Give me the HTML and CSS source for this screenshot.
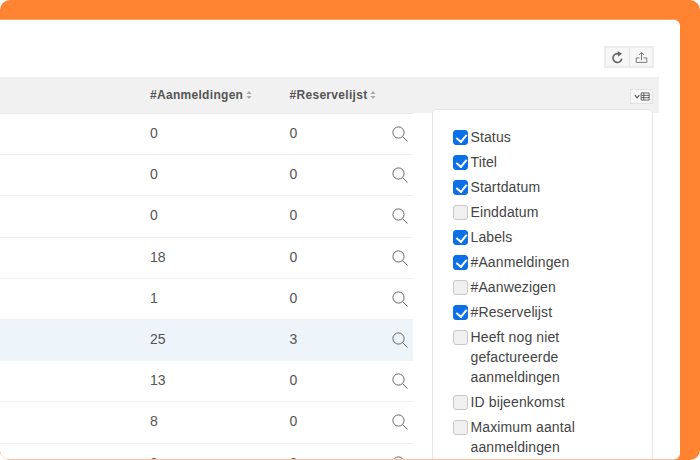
FILE: index.html
```html
<!DOCTYPE html>
<html lang="nl">
<head>
<meta charset="utf-8">
<title>Bijeenkomsten</title>
<link rel="stylesheet" href="styles.css">
</head>
<body>
<div class="frame">
  <main class="card">
    <div class="toolbar">
      <div class="btn-group">
        <button class="tool-btn" type="button" aria-label="Vernieuwen">
          <svg class="tool-icon" viewBox="0 0 16 16"><path d="M13.2 9.4a5.4 5.4 0 1 1-4.2-6" fill="none" stroke="#666" stroke-width="2"/><path d="M8.2 0 13.6 3.4 8.6 7z" fill="#666"/></svg>
        </button>
        <button class="tool-btn" type="button" aria-label="Exporteren">
          <svg class="tool-icon" viewBox="0 0 16 16"><path d="M8 11.5V2M5 4.8 8 1.8l3 3M5.5 8.5H1.5v5.5h13V8.5h-4" fill="none" stroke="#777" stroke-width="1.2"/></svg>
        </button>
      </div>
    </div>
    <div class="table-area">
      <div class="head-row">
        <div class="col-num head-cell">#Aanmeldingen<svg class="sort" viewBox="0 0 6 8"><path d="M3 0 5.5 3H.5zM3 8 .5 5h5z" fill="#aaa"/></svg></div>
        <div class="col-res head-cell">#Reservelijst<svg class="sort" viewBox="0 0 6 8"><path d="M3 0 5.5 3H.5zM3 8 .5 5h5z" fill="#aaa"/></svg></div>
        <button class="col-toggle" type="button" aria-label="Kolommen">
          <svg class="toggle-icon" viewBox="0 0 18 10"><path d="M1 3.5 3.5 6.5 6 3.5" fill="none" stroke="#555" stroke-width="1.3"/><path d="M8 1h9v8H8zM8 3.7h9M8 6.3h9M11 1v8" fill="none" stroke="#555" stroke-width="1"/></svg>
        </button>
      </div>
      <div class="body-area">
        <div class="rows">
          <div class="row"><div class="col-num">0</div><div class="col-res">0</div><svg class="search" viewBox="0 0 16 16"><circle cx="6.5" cy="6.5" r="5.6"/><path d="M10.6 10.6 15.5 15.5"/></svg></div>
          <div class="row"><div class="col-num">0</div><div class="col-res">0</div><svg class="search" viewBox="0 0 16 16"><circle cx="6.5" cy="6.5" r="5.6"/><path d="M10.6 10.6 15.5 15.5"/></svg></div>
          <div class="row"><div class="col-num">0</div><div class="col-res">0</div><svg class="search" viewBox="0 0 16 16"><circle cx="6.5" cy="6.5" r="5.6"/><path d="M10.6 10.6 15.5 15.5"/></svg></div>
          <div class="row"><div class="col-num">18</div><div class="col-res">0</div><svg class="search" viewBox="0 0 16 16"><circle cx="6.5" cy="6.5" r="5.6"/><path d="M10.6 10.6 15.5 15.5"/></svg></div>
          <div class="row"><div class="col-num">1</div><div class="col-res">0</div><svg class="search" viewBox="0 0 16 16"><circle cx="6.5" cy="6.5" r="5.6"/><path d="M10.6 10.6 15.5 15.5"/></svg></div>
          <div class="row row-active"><div class="col-num">25</div><div class="col-res">3</div><svg class="search" viewBox="0 0 16 16"><circle cx="6.5" cy="6.5" r="5.6"/><path d="M10.6 10.6 15.5 15.5"/></svg></div>
          <div class="row"><div class="col-num">13</div><div class="col-res">0</div><svg class="search" viewBox="0 0 16 16"><circle cx="6.5" cy="6.5" r="5.6"/><path d="M10.6 10.6 15.5 15.5"/></svg></div>
          <div class="row"><div class="col-num">8</div><div class="col-res">0</div><svg class="search" viewBox="0 0 16 16"><circle cx="6.5" cy="6.5" r="5.6"/><path d="M10.6 10.6 15.5 15.5"/></svg></div>
          <div class="row"><div class="col-num">0</div><div class="col-res">0</div><svg class="search" viewBox="0 0 16 16"><circle cx="6.5" cy="6.5" r="5.6"/><path d="M10.6 10.6 15.5 15.5"/></svg></div>
        </div>
      </div>
      <div class="col-menu">
        <label class="opt"><input type="checkbox" checked><span>Status</span></label>
        <label class="opt"><input type="checkbox" checked><span>Titel</span></label>
        <label class="opt"><input type="checkbox" checked><span>Startdatum</span></label>
        <label class="opt"><input type="checkbox"><span>Einddatum</span></label>
        <label class="opt"><input type="checkbox" checked><span>Labels</span></label>
        <label class="opt"><input type="checkbox" checked><span>#Aanmeldingen</span></label>
        <label class="opt"><input type="checkbox"><span>#Aanwezigen</span></label>
        <label class="opt"><input type="checkbox" checked><span>#Reservelijst</span></label>
        <label class="opt"><input type="checkbox"><span>Heeft nog niet gefactureerde aanmeldingen</span></label>
        <label class="opt"><input type="checkbox"><span>ID bijeenkomst</span></label>
        <label class="opt"><input type="checkbox"><span>Maximum aantal aanmeldingen</span></label>
      </div>
    </div>
  </main>
</div>
</body>
</html>
```
FILE: styles.css
```css
* { box-sizing: border-box; }
html, body { margin: 0; padding: 0; background: #fff; overflow: hidden; }
body { width: 700px; height: 460px; font-family: "Liberation Sans", Arial, sans-serif; color: #555; }
.frame { width: 700px; height: 460px; background: #ff8331; border-radius: 10px; padding: 20px 20px 1px 0; overflow: hidden; }
.card { height: 439px; background: #fff; border-radius: 0 6px 6px 6px; overflow: hidden; box-shadow: 0 1px 0 #ffc198, 0 -1px 0 #ffa468; }
.toolbar { height: 57px; display: flex; justify-content: flex-end; align-items: flex-start; padding: 26px 26px 0 0; }
.btn-group { display: flex; height: 22px; border: 2px solid #ececec; background: #f7f7f7; }
.tool-btn { width: 23px; padding: 0; border: 0; background: transparent; display: flex; align-items: center; justify-content: center; }
.tool-btn + .tool-btn { border-left: 1px solid #e2e2e2; }
.tool-icon { width: 13px; height: 13px; display: block; }
.table-area { position: relative; width: 659px; }
.head-row { height: 36px; background: #f1f1f1; display: flex; align-items: center; font-size: 12px; font-weight: 700; color: #555; padding-bottom: 1px; }
.col-num { width: 139.5px; margin-left: 150px; flex: none; }
.col-res { width: 100px; flex: none; }
.head-cell { display: flex; align-items: center; gap: 2.5px; letter-spacing: .3px; }
.sort { width: 6px; height: 8px; display: block; }
.col-toggle { margin-left: auto; margin-right: 6px; margin-top: 3px; width: 23px; height: 15px; padding: 0; border: 1px solid #e2e2e2; background: #f8f8f8; display: flex; align-items: center; justify-content: center; }
.toggle-icon { width: 16px; height: 9px; display: block; }
.body-area { width: 413px; border-top: 1px solid #ebebeb; }
.row { height: 41.2px; border-bottom: 1px solid #f0f0f0; display: flex; align-items: center; font-size: 14px; color: #555; position: relative; padding-bottom: 2px; }
.row-active { background: #edf4fa; border-bottom-color: #edf4fa; }
.search { position: absolute; left: 392px; top: 12px; width: 16px; height: 16px; fill: none; stroke: #666; stroke-width: 1; }
.col-menu { position: absolute; left: 432px; top: 32px; width: 221px; height: 400px; background: #fff; border: 1px solid #e6e6e6; border-radius: 4px; padding: 17px 20px; font-size: 14px; line-height: 20px; color: #444; letter-spacing: .12px; }
.opt { display: flex; align-items: flex-start; gap: 3px; margin-bottom: 5px; }
.opt input { appearance: none; position: relative; width: 14.5px; height: 14.5px; margin: 3px 0 0; flex: none; background: #f0f0f0; border: 1px solid #c9c9c9; border-radius: 3px; }
.opt input:checked { background: #0b6fe8; border-color: #0b6fe8; }
.opt input:checked::after { content: ""; position: absolute; left: 3.6px; top: .6px; width: 4.6px; height: 8.4px; border: solid #fff; border-width: 0 2.2px 2.2px 0; transform: rotate(40deg); }
```
